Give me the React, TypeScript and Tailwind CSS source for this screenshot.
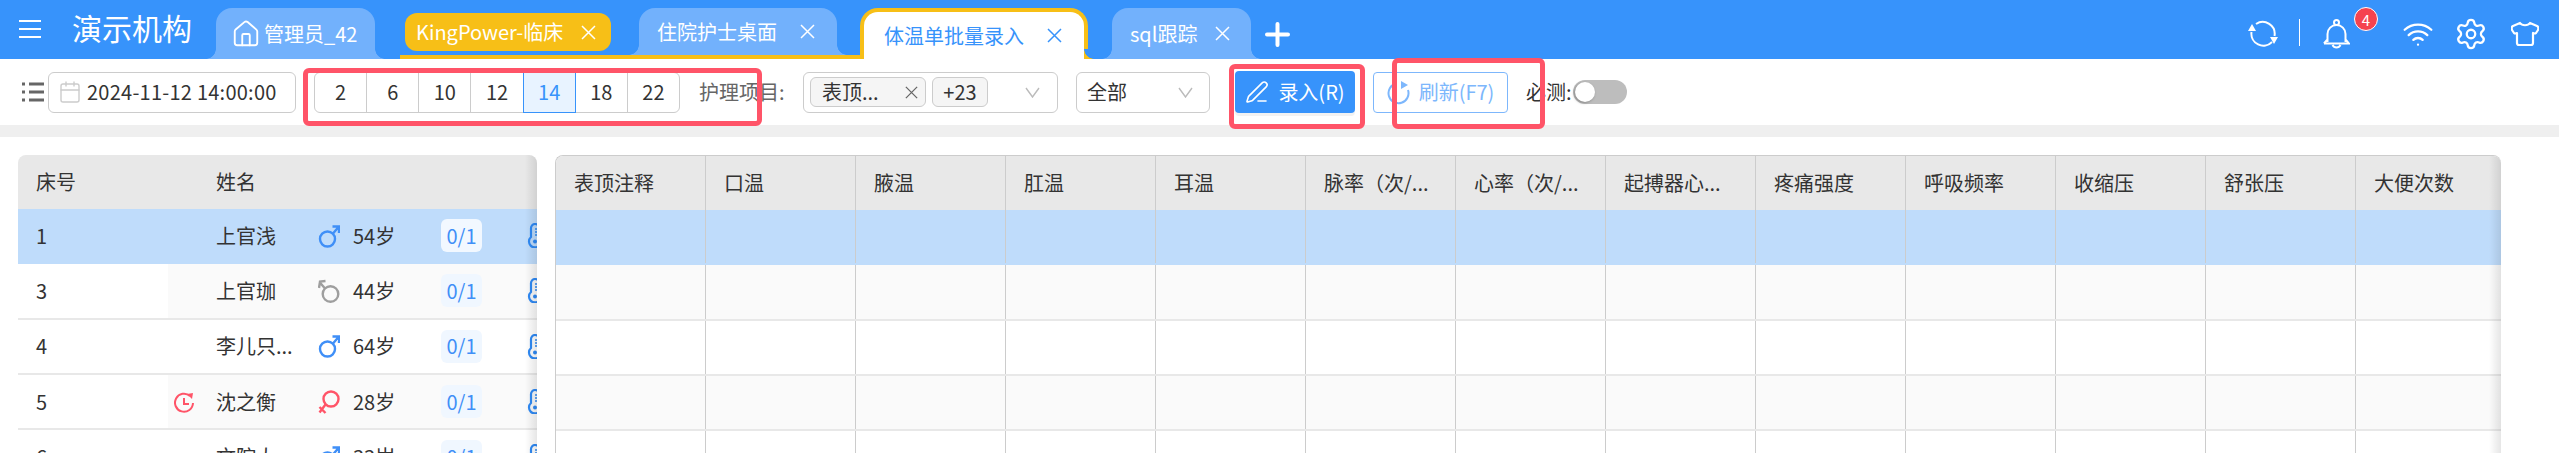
import React from 'react';
import { Calendar, House, PenLine, Settings, Wifi } from 'lucide-react';

const hours = [2, 6, 10, 12, 14, 18, 22];

const columns = ['表顶注释', '口温', '腋温', '肛温', '耳温', '脉率（次/...', '心率（次/...', '起搏器心...', '疼痛强度', '呼吸频率', '收缩压', '舒张压', '大便次数'];

type Gender = 'male' | 'female' | 'unknown';

const patients: { bed: string; name: string; gender: Gender; age: string; pending?: boolean }[] = [
  { bed: '1', name: '上官浅', gender: 'male', age: '54岁' },
  { bed: '3', name: '上官珈', gender: 'unknown', age: '44岁' },
  { bed: '4', name: '李儿只...', gender: 'male', age: '64岁' },
  { bed: '5', name: '沈之衡', gender: 'female', age: '28岁', pending: true },
  { bed: '6', name: '文院大', gender: 'male', age: '33岁' },
];

const GenderIcon = ({ gender }: { gender: Gender }) => {
  if (gender === 'male') {
    return (
      <svg width="22" height="24" viewBox="0 0 22 24" fill="none" stroke="#3f8ff7" strokeWidth="2.4">
        <circle cx="9.5" cy="15" r="7.5" />
        <path d="M15 9.5 20.5 3M14.5 2.5h6.5v6.5" />
      </svg>
    );
  }
  if (gender === 'female') {
    return (
      <svg width="22" height="24" viewBox="0 0 22 24" fill="none" stroke="#ff5468" strokeWidth="2.4">
        <circle cx="13" cy="9" r="7.5" />
        <path d="M7.5 14.5 1.5 22.5M1.5 17l6 6" />
      </svg>
    );
  }
  return (
    <svg width="22" height="24" viewBox="0 0 22 24" fill="none" stroke="#9e9e9e" strokeWidth="2.4">
      <circle cx="12.5" cy="15" r="7.8" />
      <path d="M7 9.5 1.5 3M1 9l1-6.5 5.5-.5" />
    </svg>
  );
};

const CloseIcon = ({ size = 15, color = 'currentColor' }: { size?: number; color?: string }) => (
  <svg className="shrink-0" width={size} height={size} viewBox="0 0 15 15" fill="none" stroke={color} strokeWidth="1.5">
    <path d="M1 1l13 13M14 1 1 14" />
  </svg>
);

const Chevron = () => (
  <svg className="shrink-0" width="15" height="11" viewBox="0 0 15 11" fill="none" stroke="#bbb" strokeWidth="1.4">
    <path d="M1 1l6.5 9L14 1" />
  </svg>
);

const Flare = ({ side, color, bg }: { side: 'left' | 'right'; color: string; bg: string }) => (
  <span
    className={`absolute bottom-0 h-[10px] w-[10px] ${side === 'left' ? '-left-[10px]' : '-right-[10px]'}`}
    style={{ background: `radial-gradient(circle at ${side === 'left' ? '0 0' : '100% 0'}, ${bg} 9.5px, ${color} 10px)` }}
  />
);

export default function App() {
  return (
    <div className="relative flex h-[453px] w-[2559px] flex-col overflow-hidden bg-white text-[20px] text-[#333] font-['Noto_Sans_CJK_SC','Noto_Sans',sans-serif]">
      {/* top bar */}
      <div className="flex h-[59px] shrink-0 items-start bg-[#3793fb] text-white">
        <svg className="ml-[19px] mt-[19px]" width="22" height="20" viewBox="0 0 22 20" stroke="#fff" strokeWidth="2">
          <path d="M0 2h22M0 10h22M0 18h22" />
        </svg>
        <div className="ml-[31px] mt-[6px] w-[144px] text-[30px] leading-[42px]">演示机构</div>

        <div className="relative mt-[8px] flex h-[51px] w-[159px] items-center rounded-t-[16px] bg-[#72b1fc] pl-[15px]">
          <Flare side="left" color="#72b1fc" bg="#3793fb" />
          <Flare side="right" color="#72b1fc" bg="#3793fb" />
          <House size={30} strokeWidth={1.5} />
          <span className="ml-[3px]">管理员_42</span>
        </div>

        <div className="ml-[25px] flex h-[59px] w-[460px] items-start border-b-4 border-[#f7bf17]">
          <div className="ml-[5px] mt-[13px] flex h-[38px] w-[206px] items-center rounded-[12px] bg-[#f7bf17] pl-[11px]">
            <span className="w-[165px]">KingPower-临床</span>
            <CloseIcon />
          </div>
          <div className="relative ml-[28px] mt-[8px] flex h-[47px] w-[198px] items-center rounded-t-[16px] bg-[#72b1fc] pl-[18px]">
            <Flare side="left" color="#72b1fc" bg="#3793fb" />
            <Flare side="right" color="#72b1fc" bg="#3793fb" />
            <span className="w-[143px]">住院护士桌面</span>
            <CloseIcon />
          </div>
        </div>

        <div className="relative mt-[8px] flex h-[51px] w-[228px] items-center rounded-t-[18px] border-x-4 border-t-4 border-[#f7bf17] bg-white pl-[20px] text-[#3793fb]">
          <Flare side="right" color="#f7bf17" bg="#3793fb" />
          <span className="w-[163px]">体温单批量录入</span>
          <CloseIcon />
        </div>

        <div className="relative ml-[24px] mt-[8px] flex h-[51px] w-[139px] items-center rounded-t-[16px] bg-[#72b1fc] pl-[18px]">
          <Flare side="left" color="#72b1fc" bg="#3793fb" />
          <Flare side="right" color="#72b1fc" bg="#3793fb" />
          <span className="w-[85px]">sql跟踪</span>
          <CloseIcon />
        </div>

        <svg className="ml-[14px] mt-[22px]" width="25" height="25" viewBox="0 0 25 25" stroke="#fff" strokeWidth="4" strokeLinecap="round">
          <path d="M2 12.5h21M12.5 2v21" />
        </svg>

        <svg className="ml-[958px] mt-[20px]" width="30" height="28" viewBox="0 0 30 28" fill="none" stroke="#fff" strokeWidth="2">
          <path d="M3.5 12A12 12 0 0 0 24 22M26.5 16A12 12 0 0 0 8 4" />
          <path d="M0 11h8L4 4zM22 17h8l-4 7z" fill="#fff" stroke="none" />
        </svg>
        <div className="ml-[21px] mt-[19px] h-[27px] w-px bg-white" />
        <div className="relative ml-[23px] mt-[19px]">
          <svg width="27" height="30" viewBox="0 0 27 30" fill="none" stroke="#fff" strokeWidth="2">
            <circle cx="13.5" cy="3.5" r="2.5" />
            <path d="M4.5 23V15a9 9 0 0 1 18 0v8M1 24.5h25L23 21M4 21l-3 3.5M9.5 26a4.5 4.5 0 0 0 8 0" />
          </svg>
          <span className="absolute -top-[12px] left-[31px] flex h-[24px] w-[24px] items-center justify-center rounded-full border border-white bg-[#f5434f] text-[15px] leading-none">4</span>
        </div>
        <Wifi className="ml-[52px] mt-[18px]" size={32} strokeWidth={1.7} />
        <Settings className="ml-[20px] mt-[17px]" size={34} strokeWidth={1.6} />
        <svg className="ml-[23px] mt-[21px]" width="28" height="26" viewBox="0 0 28 26" fill="none" stroke="#fff" strokeWidth="2.2" strokeLinejoin="round">
          <path d="M9 2c2 3 8 3 10 0l7 3q2 1 1 4l-2 3q-1 1-3 0v10q0 2-2 2H8q-2 0-2-2V12q-2 1-3 0L1 9Q0 6 2 5Z" />
        </svg>
      </div>

      {/* toolbar */}
      <div className="relative flex h-[66px] shrink-0 items-center pl-[22px]">
        <svg width="22" height="24" viewBox="0 0 22 24" fill="none" stroke="#666" strokeWidth="3">
          <path d="M0 4h3M7 4h15M0 12h3M7 12h15M0 20h3M7 20h15" />
        </svg>
        <div className="ml-[4px] flex h-[41px] w-[248px] items-center rounded-[6px] border border-[#ccc] pl-[9px]">
          <Calendar size={24} strokeWidth={1.4} className="text-[#ccc]" />
          <span className="ml-[5px] whitespace-nowrap tracking-[0.25px]">2024-11-12 14:00:00</span>
        </div>

        <div className="ml-[18px] flex h-[41px] w-[366px] items-stretch rounded-[6px] border border-[#ccc]">
          {hours.map((h, index) => (
            <div
              key={h}
              className={`-my-px flex flex-1 items-center justify-center ${h === 14 ? 'border border-[#3793fb] bg-[#e8f3ff] text-[#3793fb]' : index > 0 && h !== 18 ? 'border-l border-[#ccc]' : ''}`}
            >
              {h}
            </div>
          ))}
        </div>

        <span className="ml-[19px] w-[92px] whitespace-nowrap text-[#666]">护理项目:</span>
        <div className="ml-[12px] flex h-[41px] w-[255px] items-center rounded-[6px] border border-[#ccc] pl-[6px]">
          <div className="flex h-[30px] w-[116px] items-center rounded-[6px] border border-[#ccc] bg-[#f5f5f5] pl-[11px]">
            <span className="w-[83px]">表顶...</span>
            <CloseIcon size={13} color="#666" />
          </div>
          <div className="ml-[6px] flex h-[30px] w-[56px] items-center justify-center rounded-[6px] border border-[#ccc] bg-[#f5f5f5]">+23</div>
          <span className="ml-[37px]"><Chevron /></span>
        </div>
        <div className="ml-[18px] flex h-[41px] w-[134px] items-center rounded-[6px] border border-[#ccc] pl-[10px]">
          <span className="w-[91px]">全部</span>
          <Chevron />
        </div>

        <div className="ml-[25px] flex h-[42px] w-[120px] items-center justify-center rounded-[4px] bg-[#3793fb] text-white shadow-[0_3px_0_#f2f2f2]">
          <PenLine size={24} strokeWidth={1.6} />
          <span className="ml-[9px]">录入(R)</span>
        </div>
        <div className="ml-[18px] flex h-[41px] w-[135px] items-center justify-center rounded-[4px] border border-[#7db7fc] text-[#7db7fc]">
          <svg width="24" height="26" viewBox="0 0 24 26" fill="none" stroke="#7db7fc" strokeWidth="2">
            <path d="M9 4.5A10 10 0 1 0 21 11" />
            <path d="M14 2l7 4-7 4z" fill="#7db7fc" stroke="none" />
          </svg>
          <span className="ml-[8px]">刷新(F7)</span>
        </div>
        <span className="ml-[18px] w-[47px] whitespace-nowrap">必测:</span>
        <div className="flex h-[24px] w-[54px] items-center rounded-full bg-[#bdbdbd] pl-[2px]">
          <span className="h-[20px] w-[20px] rounded-full bg-white shadow-[-1px_1px_3px_rgba(0,0,0,0.3)]" />
        </div>

        {/* red annotation frames */}
        <div className="pointer-events-none absolute left-[303px] top-[9px] z-10 h-[58px] w-[459px] rounded-[6px] border-[5px] border-[#ff5468]" />
        <div className="pointer-events-none absolute left-[1229px] top-[5px] z-10 h-[65px] w-[136px] rounded-[6px] border-[5px] border-[#ff5468]" />
        <div className="pointer-events-none absolute left-[1392px] -top-px z-10 h-[71px] w-[153px] rounded-[6px] border-[5px] border-[#ff5468]" />
      </div>

      <div className="h-[12px] shrink-0 bg-[#efefef]" />

      {/* tables */}
      <div className="flex flex-1 items-start overflow-hidden pl-[18px] pt-[18px]">
        <div className="relative w-[519px] shrink-0 overflow-hidden rounded-t-[8px]">
          <div className="flex h-[54px] items-center bg-[#e8e8e8]">
            <span className="w-[198px] pl-[18px]">床号</span>
            <span>姓名</span>
          </div>
          {patients.map((p, index) => (
            <div key={p.bed} className={`flex h-[55.3px] border-b-2 ${index === 0 ? 'border-[#bfdcfb] bg-[#bfdcfb]' : 'border-[#e8e8e8]'}`}>
              <div className="flex w-[150px] shrink-0 items-center pl-[18px]">{p.bed}</div>
              <div className={`flex flex-1 items-center ${index % 2 === 1 ? 'bg-[#fafafa]' : ''}`}>
                <div className="w-[48px] shrink-0 pl-[6px]">
                  {p.pending && (
                    <svg className="block" width="20" height="22" viewBox="0 0 20 22" fill="none" stroke="#ff5468" strokeWidth="2">
                      <path d="M16 5A9 9 0 1 0 19 12" />
                      <path d="M10 7v6h5" />
                      <path d="M13 3l6-1-1 6z" fill="#ff5468" stroke="none" />
                    </svg>
                  )}
                </div>
                <div className="w-[102px] shrink-0 whitespace-nowrap">{p.name}</div>
                <div className="w-[35px] shrink-0">
                  <GenderIcon gender={p.gender} />
                </div>
                <div className="w-[88px] shrink-0">{p.age}</div>
                <div className={`flex h-[33px] w-[41px] shrink-0 items-center justify-center rounded-[6px] text-[#3f8ff7] ${index === 0 ? 'bg-[#f2f8ff]' : 'bg-[#f0f7ff]'}`}>0/1</div>
                <svg className="ml-[45px] shrink-0" width="20" height="25" viewBox="0 0 20 25" fill="none" stroke="#2f8af5" strokeWidth="2.2">
                  <path d="M4 14V5a4 4 0 0 1 8 0v9a6 6 0 1 1-8 0Z" />
                  <path d="M8 6h4M8 9h4M8 12h4" strokeWidth="1.4" />
                  <circle cx="8" cy="18.5" r="2" fill="#2f8af5" stroke="none" />
                </svg>
              </div>
            </div>
          ))}
          <div className="absolute inset-y-0 right-0 w-[12px] bg-gradient-to-l from-black/10 to-transparent" />
        </div>

        <div className="relative ml-[18px] w-[1946px] shrink-0 overflow-hidden rounded-t-[8px] border-l border-t border-[#ccc]">
          <div className="flex h-[54px] bg-[#e8e8e8]">
            {columns.map((c) => (
              <div key={c} className="flex w-[150px] shrink-0 items-center whitespace-nowrap border-r border-[#ccc] pl-[18px]">
                {c}
              </div>
            ))}
          </div>
          {patients.map((p, index) => (
            <div key={p.bed} className={`flex h-[55.3px] border-b-2 ${index === 0 ? 'border-[#bfdcfb] bg-[#bfdcfb]' : index % 2 === 1 ? 'border-[#e8e8e8] bg-[#fafafa]' : 'border-[#e8e8e8]'}`}>
              {columns.map((c) => (
                <div key={c} className="w-[150px] shrink-0 border-r border-[#ccc]" />
              ))}
            </div>
          ))}
          <div className="absolute inset-y-0 right-0 w-[12px] bg-gradient-to-l from-black/10 to-transparent" />
        </div>
      </div>
    </div>
  );
}
